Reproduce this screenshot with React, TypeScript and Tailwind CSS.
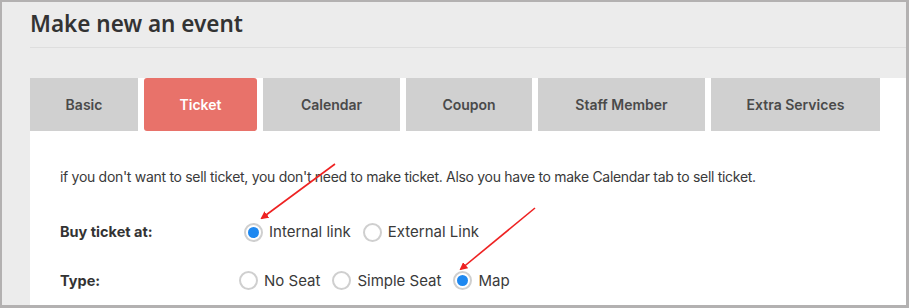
import { useState } from "react";

const tabs = [
  { name: "Basic", w: "w-[108px]" },
  { name: "Ticket", w: "w-[113px]" },
  { name: "Calendar", w: "w-[137px]" },
  { name: "Coupon", w: "w-[126px]" },
  { name: "Staff Member", w: "w-[167px]" },
  { name: "Extra Services", w: "w-[169px]" },
];

const Radio = ({ label, checked, onClick }: { label: string; checked: boolean; onClick: () => void }) => (
  <label className="flex items-center gap-[6px] cursor-pointer" onClick={onClick}>
    <span className="flex h-[19px] w-[19px] items-center justify-center rounded-full border-2 border-[#cfcfcf] bg-white">
      {checked && <span className="h-[11px] w-[11px] rounded-full bg-[#1e88f0]" />}
    </span>
    <span className="text-[15px] text-[#3a3a3a]">{label}</span>
  </label>
);

export default function App() {
  const [buyAt, setBuyAt] = useState("Internal link");
  const [type, setType] = useState("Map");

  return (
    <div
      className="relative h-[308px] w-[909px] overflow-hidden border-t-2 border-l-2 border-r-[3px] border-b-[3px] border-[#b3b1b1] bg-[#ececec]"
      style={{ fontFamily: "Inter, 'Noto Sans', sans-serif" }}
    >
      <div className="pl-[28px]">
        <h1
          className="pt-[6px] text-[22.5px] font-semibold text-[#333] leading-[32px]"
          style={{ fontFamily: "'Noto Sans', sans-serif" }}
        >
          Make new an event
        </h1>
        <div className="mt-[7px] h-px bg-[#dedede]" />

        <div className="mt-[30px] bg-white h-[240px]">
          <div className="flex gap-[6px]">
            {tabs.map((t) => (
              <div
                key={t.name}
                className={`${t.w} flex h-[53px] items-center justify-center text-[14px] font-semibold ${
                  t.name === "Ticket" ? "rounded-[3px] bg-[#e8726a] text-white" : "bg-[#d0d0d0] text-[#4a4a4a]"
                }`}
              >
                {t.name}
              </div>
            ))}
          </div>

          <div className="pl-[30px] pt-[35px] text-[#3a3a3a]">
            <p className="text-[14px] tracking-[-0.3px]">
              if you don't want to sell ticket, you don't need to make ticket. Also you have to make Calendar tab to sell ticket.
            </p>
            <div className="mt-[34px] flex items-center">
              <div className="w-[184px] text-[14.5px] font-bold text-[#333]">Buy ticket at:</div>
              <div className="flex gap-[12px]">
                {["Internal link", "External Link"].map((l) => (
                  <Radio key={l} label={l} checked={buyAt === l} onClick={() => setBuyAt(l)} />
                ))}
              </div>
            </div>
            <div className="mt-[26px] flex items-center">
              <div className="w-[179px] text-[14.5px] font-bold text-[#333]">Type:</div>
              <div className="flex gap-[12px]">
                {["No Seat", "Simple Seat", "Map"].map((l) => (
                  <Radio key={l} label={l} checked={type === l} onClick={() => setType(l)} />
                ))}
              </div>
            </div>
          </div>
        </div>
      </div>

      <svg className="pointer-events-none absolute left-[-2px] top-[-2px]" width="909" height="308">
        <defs>
          <marker id="ah" markerWidth="8" markerHeight="8" refX="6" refY="4" orient="auto" markerUnits="userSpaceOnUse">
            <path d="M0,0 L8,4 L0,8 z" fill="#ee2222" />
          </marker>
        </defs>
        <line x1="335" y1="164" x2="262" y2="218" stroke="#ee2222" strokeWidth="1.6" markerEnd="url(#ah)" />
        <line x1="535" y1="208" x2="461" y2="269" stroke="#ee2222" strokeWidth="1.6" markerEnd="url(#ah)" />
      </svg>
    </div>
  );
}
